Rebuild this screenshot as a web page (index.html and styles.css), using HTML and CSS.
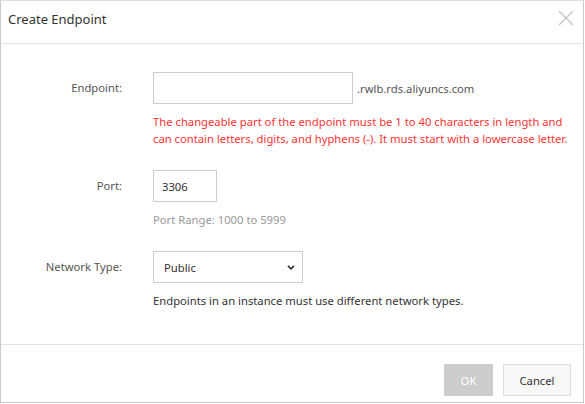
FILE: index.html
```html
<!DOCTYPE html>
<html>
<head>
<meta charset="utf-8">
<link rel="stylesheet" href="styles.css">
</head>
<body>
<div class="dialog">
  <div class="dialog-header">
    <span class="dialog-title">Create Endpoint</span>
    <button class="close" aria-label="Close">
      <svg width="16" height="16" viewBox="0 0 16 16"><path d="M1 1L15 15M15 1L1 15" stroke="#c4c4c4" stroke-width="1.4" fill="none"/></svg>
    </button>
  </div>
  <div class="dialog-body">
    <div class="form-row">
      <label class="form-label">Endpoint:</label>
      <div class="form-control">
        <div class="inline">
          <input class="input input-endpoint" type="text">
          <span class="suffix">.rwlb.rds.aliyuncs.com</span>
        </div>
        <div class="help error">The changeable part of the endpoint must be 1 to 40 characters in length and can contain letters, digits, and hyphens (-). It must start with a lowercase letter.</div>
      </div>
    </div>
    <div class="form-row">
      <label class="form-label">Port:</label>
      <div class="form-control">
        <input class="input input-port" type="text" value="3306">
        <div class="help muted">Port Range: 1000 to 5999</div>
      </div>
    </div>
    <div class="form-row">
      <label class="form-label">Network Type:</label>
      <div class="form-control">
        <div class="select">
          <span>Public</span>
          <svg class="chev" width="10" height="7" viewBox="0 0 10 7"><path d="M2 1.8L5 4.8L8 1.8" stroke="#333" stroke-width="1.7" fill="none"/></svg>
        </div>
        <div class="help">Endpoints in an instance must use different network types.</div>
      </div>
    </div>
  </div>
  <div class="dialog-footer">
    <button class="btn btn-ok">OK</button>
    <button class="btn btn-cancel">Cancel</button>
  </div>
</div>
</body>
</html>
```
FILE: styles.css
```css
* { box-sizing: border-box; }
html, body { margin: 0; padding: 0; background: #fff; }
body {
  font-family: "Noto Sans", "Open Sans", sans-serif;
  font-size: 11.25px;
  color: #333;
}
.dialog {
  width: 584px;
  height: 403px;
  border: 1px solid #c9c9c9;
  border-top-color: #e0e0e0;
  display: flex;
  flex-direction: column;
  background: #fff;
}
.dialog-header {
  height: 43px;
  border-bottom: 1px solid #e3e3e3;
  display: flex;
  align-items: center;
  justify-content: space-between;
  padding: 0 9px 0 7px;
  flex: none;
}
.dialog-title {
  font-size: 13px;
  color: #333;
  margin-top: -6px;
}
.close {
  border: 0;
  background: none;
  padding: 0;
  width: 16px;
  height: 16px;
  display: flex;
  margin-top: -8px;
}
.dialog-body {
  flex: 1;
  padding-top: 28px;
  display: flex;
  flex-direction: column;
  gap: 23px;
}
.form-row {
  display: grid;
  grid-template-columns: 121px 1fr;
  column-gap: 31px;
}
.form-label {
  text-align: right;
  line-height: 32px;
  height: 32px;
  color: #555;
}
.form-control { min-width: 0; }
.inline { display: flex; align-items: center; gap: 4px; }
.input {
  height: 32px;
  border: 1px solid #cccccc;
  font-family: inherit;
  font-size: 11.25px;
  color: #333;
  padding: 0 8px;
  outline: none;
  background: #fff;
  margin: 0;
}
.input-endpoint { width: 200px; }
.input-port { width: 64px; display: block; }
.suffix { color: #555; }
.help {
  margin-top: 9px;
  line-height: 17px;
  color: #333;
}
.help.error { color: #ff3333; }
.help.muted { color: #999; }
.select {
  width: 150px;
  height: 32px;
  border: 1px solid #cccccc;
  display: flex;
  align-items: center;
  justify-content: space-between;
  padding: 0 6px 0 10px;
  color: #333;
}
.dialog-footer {
  flex: none;
  height: 58px;
  border-top: 1px solid #e3e3e3;
  display: flex;
  justify-content: flex-end;
  align-items: flex-start;
  gap: 10px;
  padding: 19px 12px 0 0;
}
.btn {
  height: 32px;
  font-family: inherit;
  font-size: 11.25px;
  padding: 0;
  margin: 0;
}
.btn-ok {
  width: 49px;
  background: #cccccc;
  border: 1px solid #cccccc;
  color: #fff;
}
.btn-cancel {
  width: 68px;
  background: #f7f7f7;
  border: 1px solid #dddddd;
  color: #333;
}
```
